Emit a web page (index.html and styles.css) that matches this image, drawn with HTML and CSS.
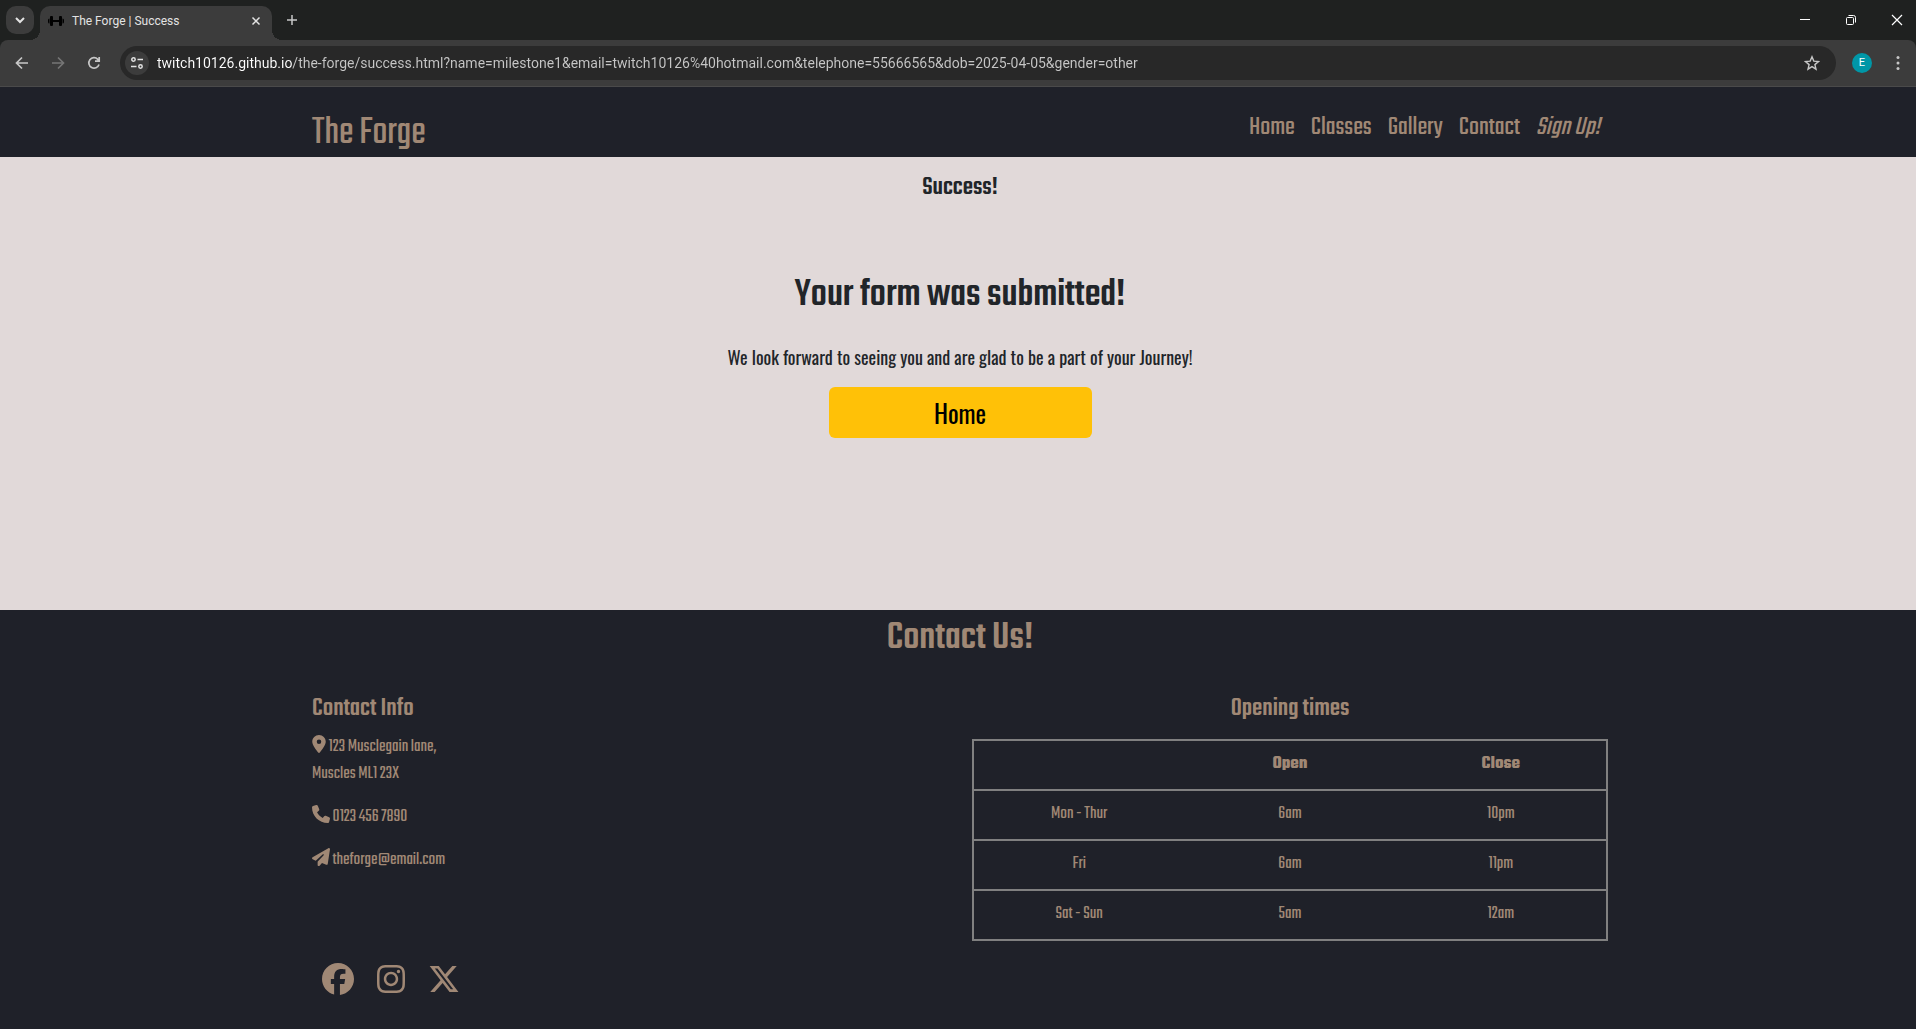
FILE: index.html
```html
<!DOCTYPE html>
<html lang="en">
<head>
<meta charset="utf-8">
<title>The Forge | Success</title>
<link rel="stylesheet" href="styles.css">
</head>
<body>
<div class="browser">
  <div class="tabstrip">
    <button class="tab-search" aria-label="Search tabs"><svg width="16" height="16" viewBox="0 0 16 16"><path d="M4 6l4 4 4-4" fill="none" stroke="#e3e3e3" stroke-width="2"/></svg></button>
    <div class="tab">
      <svg class="favicon" width="16" height="16" viewBox="0 0 16 16"><path d="M5 7h6v2H5zM2 4q0-1 1-1h1q1 0 1 1v8q0 1-1 1H3q-1 0-1-1zM11 4q0-1 1-1h1q1 0 1 1v8q0 1-1 1h-1q-1 0-1-1zM0 7q0-1.500 1.500-1.500V10.500Q0 10.500 0 9zM16 7q0-1.500-1.500-1.500V10.500Q16 10.500 16 9z" fill="#000"/></svg>
      <span class="tab-title">The Forge | Success</span>
      <button class="icon-button" aria-label="Close tab"><svg width="16" height="16" viewBox="0 0 16 16"><path d="M4.500 4.500l7 7M11.500 4.500l-7 7" stroke="#e3e3e3" stroke-width="1.500"/></svg></button>
    </div>
    <button class="icon-button new-tab" aria-label="New tab"><svg width="16" height="16" viewBox="0 0 16 16"><path d="M8 3v10M3 8h10" stroke="#c7c7c7" stroke-width="1.500"/></svg></button>
    <div class="window-controls">
      <button class="window-button" aria-label="Minimise"><svg width="12" height="12" viewBox="0 0 12 12"><path d="M1 5.500h10" stroke="#fff"/></svg></button>
      <button class="window-button" aria-label="Restore"><svg width="12" height="12" viewBox="0 0 12 12"><g fill="none" stroke="#fff"><rect x="1.500" y="3.500" width="7" height="7" rx="1"/><path d="M3.500 1.500h5q2 0 2 2v5"/></g></svg></button>
      <button class="window-button" aria-label="Close"><svg width="12" height="12" viewBox="0 0 12 12"><path d="M1 1l10 10M11 1L1 11" stroke="#fff" stroke-width="1.200"/></svg></button>
    </div>
  </div>
  <div class="toolbar">
    <button class="tool" aria-label="Back"><svg width="16" height="16" viewBox="0 0 16 16"><path d="M14 8H3M8 2.500L2.500 8 8 13.500" fill="none" stroke="#c7c7c7" stroke-width="1.700"/></svg></button>
    <button class="tool" aria-label="Forward" disabled><svg width="16" height="16" viewBox="0 0 16 16"><path d="M2 8h11M8 2.500L13.500 8 8 13.500" fill="none" stroke="#757575" stroke-width="1.700"/></svg></button>
    <button class="tool" aria-label="Reload"><svg width="16" height="16" viewBox="0 0 16 16"><path d="M13 9.500A5.200 5.200 0 1 1 11.800 4.300L13 5.500M13.200 2v4.200H9" fill="none" stroke="#c7c7c7" stroke-width="1.700"/></svg></button>
    <div class="omnibox">
      <button class="site-info" aria-label="View site information"><svg width="14" height="14" viewBox="0 0 14 14"><g fill="none" stroke="#e3e3e3" stroke-width="1.500"><circle cx="3.500" cy="3.500" r="1.700"/><path d="M7.500 3.500H13M1 10.500h5.500"/><circle cx="10.500" cy="10.500" r="1.700"/></g></svg></button>
      <input class="address" type="text" aria-label="Address" value="twitch10126.github.io/the-forge/success.html?name=milestone1&amp;email=twitch10126%40hotmail.com&amp;telephone=55666565&amp;dob=2025-04-05&amp;gender=other">
      <button class="icon-button" aria-label="Bookmark this page"><svg width="16" height="16" viewBox="0 0 16 16"><path d="M8 1.800l1.800 4.300 4.700.4-3.600 3.100 1.100 4.600L8 11.700l-4 2.500 1.100-4.600L1.500 6.500l4.700-.4z" fill="none" stroke="#c7c7c7" stroke-width="1.400"/></svg></button>
    </div>
    <button class="avatar" aria-label="Profile">E</button>
    <button class="icon-button" aria-label="Menu"><svg width="16" height="16" viewBox="0 0 16 16" fill="#c7c7c7"><circle cx="8" cy="2.500" r="1.500"/><circle cx="8" cy="8" r="1.500"/><circle cx="8" cy="13.500" r="1.500"/></svg></button>
  </div>
</div>

<header class="site-header">
  <div class="container header-row">
    <a class="brand" href="#">The Forge</a>
    <nav class="nav">
      <a href="#">Home</a>
      <a href="#">Classes</a>
      <a href="#">Gallery</a>
      <a href="#">Contact</a>
      <a class="signup" href="#">Sign Up!</a>
    </nav>
  </div>
</header>

<main class="success">
  <h1 class="page-title">Success!</h1>
  <h2 class="headline">Your form was submitted!</h2>
  <p class="message">We look forward to seeing you and are glad to be a part of your Journey!</p>
  <button class="home-button">Home</button>
</main>

<footer class="site-footer">
  <div class="container">
    <h2 class="footer-title">Contact Us!</h2>
    <div class="footer-columns">
      <section class="contact">
        <h3 class="column-title">Contact Info</h3>
        <address class="details">
          <p><svg class="icon" viewBox="0 0 384 512" width="14" height="18"><path d="M215.700 499.200C267 435 384 279.400 384 192C384 86 298 0 192 0S0 86 0 192c0 87.400 117 243 168.300 307.200c12.300 15.300 35.100 15.300 47.400 0zM192 128a64 64 0 1 1 0 128 64 64 0 1 1 0-128z"/></svg> 123 Musclegain lane,<br>Muscles ML1 23X</p>
          <p><svg class="icon" viewBox="0 0 512 512" width="18" height="18"><path d="M164.900 24.600c-7.700-18.600-28-28.500-47.400-23.200l-88 24C12.100 30.200 0 46 0 64C0 311.400 200.600 512 448 512c18 0 33.800-12.100 38.600-29.500l24-88c5.300-19.400-4.600-39.700-23.200-47.400l-96-40c-16.300-6.800-35.200-2.100-46.300 11.600L304.700 368C234.300 334.700 177.300 277.700 144 207.300L193.300 167c13.700-11.200 18.400-30 11.600-46.300l-40-96z"/></svg> 0123 456 7890</p>
          <p><svg class="icon" viewBox="0 0 512 512" width="18" height="18"><path d="M498.100 5.600c10.100 7 15.400 19.100 13.500 31.200l-64 416c-1.500 9.700-7.400 18.200-16 23s-18.900 5.400-28 1.600L284 427.700l-68.500 74.100c-8.900 9.700-22.900 12.900-35.200 8.100S160 493.200 160 480V396.400c0-4 1.500-7.800 4.200-10.700L331.800 202.800c5.800-6.300 5.600-16-.4-22s-15.700-6.400-22-.7L106 360.800 17.700 316.600C7.100 311.300 .3 300.700 0 288.900s5.900-22.800 16.100-28.700l448-256c10.700-6.100 23.900-5.500 34 1.400z"/></svg> theforge@email.com</p>
        </address>
      </section>
      <section class="opening">
        <h3 class="column-title">Opening times</h3>
        <table class="hours">
          <thead><tr><td></td><th scope="col">Open</th><th scope="col">Close</th></tr></thead>
          <tbody>
            <tr><td>Mon - Thur</td><td>6am</td><td>10pm</td></tr>
            <tr><td>Fri</td><td>6am</td><td>11pm</td></tr>
            <tr><td>Sat - Sun</td><td>5am</td><td>12am</td></tr>
          </tbody>
        </table>
      </section>
    </div>
    <div class="social">
      <a href="#" aria-label="Facebook"><svg class="icon" viewBox="0 0 512 512" width="32" height="32"><path d="M512 256C512 114.600 397.400 0 256 0S0 114.600 0 256C0 376 82.700 476.800 194.200 504.500V334.200H141.400V256h52.800V222.300c0-87.100 39.400-127.500 125-127.500c16.200 0 44.200 3.200 55.700 6.400V172c-6-.6-16.500-1-29.600-1c-42 0-58.200 15.900-58.200 57.200V256h83.600l-14.400 78.200H287V510.100C413.800 494.800 512 386.900 512 256z"/></svg></a>
      <a href="#" aria-label="Instagram"><svg class="icon" viewBox="0 0 448 512" width="28" height="32"><path d="M224.100 141c-63.600 0-114.900 51.300-114.900 114.900s51.300 114.900 114.900 114.900S339 319.500 339 255.900 287.700 141 224.100 141zm0 189.600c-41.100 0-74.700-33.500-74.700-74.700s33.500-74.700 74.700-74.700 74.700 33.500 74.700 74.700-33.600 74.700-74.700 74.700zm146.400-194.300c0 14.900-12 26.800-26.800 26.800-14.900 0-26.800-12-26.800-26.800s12-26.800 26.800-26.800 26.800 12 26.800 26.800zm76.100 27.200c-1.700-35.900-9.900-67.700-36.200-93.900-26.200-26.200-58-34.400-93.900-36.200-37-2.100-147.900-2.100-184.900 0-35.800 1.700-67.600 9.900-93.900 36.100s-34.400 58-36.200 93.900c-2.100 37-2.100 147.900 0 184.900 1.700 35.900 9.900 67.700 36.200 93.900s58 34.400 93.900 36.200c37 2.100 147.900 2.100 184.900 0 35.900-1.700 67.700-9.900 93.900-36.200 26.200-26.200 34.400-58 36.200-93.900 2.100-37 2.100-147.800 0-184.800zM398.800 388c-7.800 19.600-22.900 34.700-42.600 42.600-29.500 11.700-99.500 9-132.100 9s-102.700 2.600-132.100-9c-19.600-7.800-34.700-22.900-42.600-42.600-11.700-29.500-9-99.500-9-132.100s-2.600-102.700 9-132.100c7.800-19.600 22.900-34.700 42.600-42.600 29.500-11.700 99.500-9 132.100-9s102.700-2.600 132.100 9c19.600 7.800 34.700 22.900 42.600 42.600 11.700 29.500 9 99.500 9 132.100s2.700 102.700-9 132.100z"/></svg></a>
      <a href="#" aria-label="X"><svg class="icon" viewBox="0 0 512 512" width="32" height="32"><path d="M389.200 48h70.600L305.600 224.200 487 464H345L233.700 318.600 106.500 464H35.800L200.700 275.500 26.800 48H172.400L272.900 180.900 389.200 48zM364.400 421.800h39.100L151.100 88h-42L364.400 421.800z"/></svg></a>
    </div>
  </div>
</footer>
</body>
</html>
```
FILE: styles.css
```css
* {
  box-sizing: border-box;
}

html {
  height: 100%;
}

body {
  margin: 0;
  min-height: 100%;
  display: flex;
  flex-direction: column;
  background: #1f2129;
  font-family: Teko, "Liberation Sans Narrow", "Liberation Sans", sans-serif;
}

h1, h2, h3, p {
  margin: 0;
}

h1, h2, h3 {
  font-weight: 500;
}

button {
  padding: 0;
  border: 0;
  background: none;
  font-family: inherit;
}

svg {
  display: block;
}

/* Browser window */
.browser {
  overflow: hidden;
  font-family: "Segoe UI", Roboto, sans-serif;
  background: #1f2120;
}

.tabstrip {
  display: flex;
  align-items: center;
  height: 40px;
  padding-left: 6px;
}

.tab-search {
  display: grid;
  place-items: center;
  width: 28px;
  height: 28px;
  border-radius: 10px;
  background: #3c3c3c;
}

.tab {
  position: relative;
  display: flex;
  align-items: center;
  align-self: flex-end;
  gap: 8px;
  width: 232px;
  height: 34px;
  margin-left: 6px;
  padding: 0 8px 4px;
  border-radius: 10px 10px 0 0;
  background: #3c3c3c;
}

/* Curved feet where the active tab meets the toolbar */
.tab::before,
.tab::after {
  content: "";
  position: absolute;
  bottom: 0;
  width: 10px;
  height: 10px;
}

.tab::before {
  right: 100%;
  background: radial-gradient(circle at 0 0, transparent 10px, #3c3c3c 10px);
}

.tab::after {
  left: 100%;
  background: radial-gradient(circle at 100% 0, transparent 10px, #3c3c3c 10px);
}

.tab-title {
  flex: 1;
  color: #e3e3e3;
  font-size: 12px;
  white-space: nowrap;
}

.icon-button {
  display: grid;
  place-items: center;
  width: 16px;
  height: 16px;
}

.new-tab {
  margin-left: 12px;
}

.window-controls {
  display: flex;
  margin: 0 -4px 0 auto;
}

.window-button {
  display: grid;
  place-items: center;
  width: 46px;
  height: 40px;
}

.toolbar {
  display: flex;
  align-items: center;
  height: 47px;
  padding: 0 10px 0 4px;
  border-bottom: 1px solid #4a4a4a;
  border-radius: 8px 8px 0 0;
  background: #3c3c3c;
}

.tool {
  display: grid;
  place-items: center;
  width: 36px;
  height: 34px;
}

.omnibox {
  flex: 1;
  display: flex;
  align-items: center;
  gap: 8px;
  height: 34px;
  margin: 0 16px 0 8px;
  padding: 0 16px 0 5px;
  border-radius: 17px;
  background: #282828;
}

.site-info {
  display: grid;
  place-items: center;
  width: 24px;
  height: 24px;
  border-radius: 50%;
  background: #3c3c3c;
}

.address {
  flex: 1;
  min-width: 0;
  height: 24px;
  padding: 0;
  border: 0;
  outline: 0;
  background: linear-gradient(to right, #fff 135px, #c7c7c7 135px);
  background-clip: text;
  color: transparent;
  font-family: inherit;
  font-size: 14px;
}

.avatar {
  width: 20px;
  height: 20px;
  margin-right: 18px;
  border-radius: 50%;
  background: #0097a7;
  color: #fff;
  font-size: 11px;
  line-height: 20px;
}

/* Site */
.container {
  width: 100%;
  max-width: 1320px;
  margin: 0 auto;
  padding: 0 12px;
}

.site-header,
.success,
.site-footer {
  padding-left: 4px;
  color: #a08875;
}

.site-header a {
  color: #a08875;
  text-decoration: none;
}

.header-row {
  display: flex;
  justify-content: space-between;
  height: 70px;
  padding-top: 16px;
}

.brand {
  font-size: 40px;
  line-height: 62px;
}

.nav {
  display: flex;
  gap: 16px;
  padding-right: 8px;
  font-size: 27px;
  line-height: 50px;
}

.signup {
  font-style: italic;
}

.success {
  display: flex;
  flex-direction: column;
  align-items: center;
  min-height: 453px;
  padding-top: 16px;
  background: #e1d9d9;
  color: #212529;
}

.page-title {
  font-size: 26px;
  line-height: 30px;
}

.headline {
  margin-top: 69px;
  font-size: 40px;
  line-height: 48px;
}

.message {
  margin-top: 23px;
  font-family: Oswald, "Liberation Sans Narrow", "Liberation Sans", sans-serif;
  font-size: 18px;
  line-height: 28px;
}

.home-button {
  width: 263px;
  height: 51px;
  margin-top: 16px;
  border-radius: 6px;
  background: #ffc107;
  color: #000;
  font-family: Oswald, "Liberation Sans Narrow", "Liberation Sans", sans-serif;
  font-size: 25px;
}

.site-footer {
  flex: 1;
}

.footer-title {
  padding-top: 5px;
  font-size: 40px;
  line-height: 48px;
  text-align: center;
}

.footer-columns {
  display: grid;
  grid-template-columns: 1fr 1fr;
  gap: 24px;
  margin-top: 30px;
}

.column-title {
  font-size: 26px;
  line-height: 32px;
}

.details {
  display: grid;
  gap: 16px;
  margin-top: 9px;
  font-size: 18px;
  font-style: normal;
  line-height: 27px;
}

.icon {
  fill: #a08875;
}

.details .icon {
  display: inline-block;
  vertical-align: -2px;
}

.opening {
  text-align: center;
}

.hours {
  width: 100%;
  margin-top: 14px;
  border: 2px solid #808080;
  border-collapse: collapse;
  table-layout: fixed;
  font-size: 18px;
  line-height: 24px;
}

.hours tr {
  border-bottom: 2px solid #808080;
}

.hours th,
.hours td {
  height: 50px;
  padding: 9px 8px 11px;
}

.social {
  display: flex;
  gap: 23px;
  margin-top: 22px;
  padding-left: 10px;
}
```
